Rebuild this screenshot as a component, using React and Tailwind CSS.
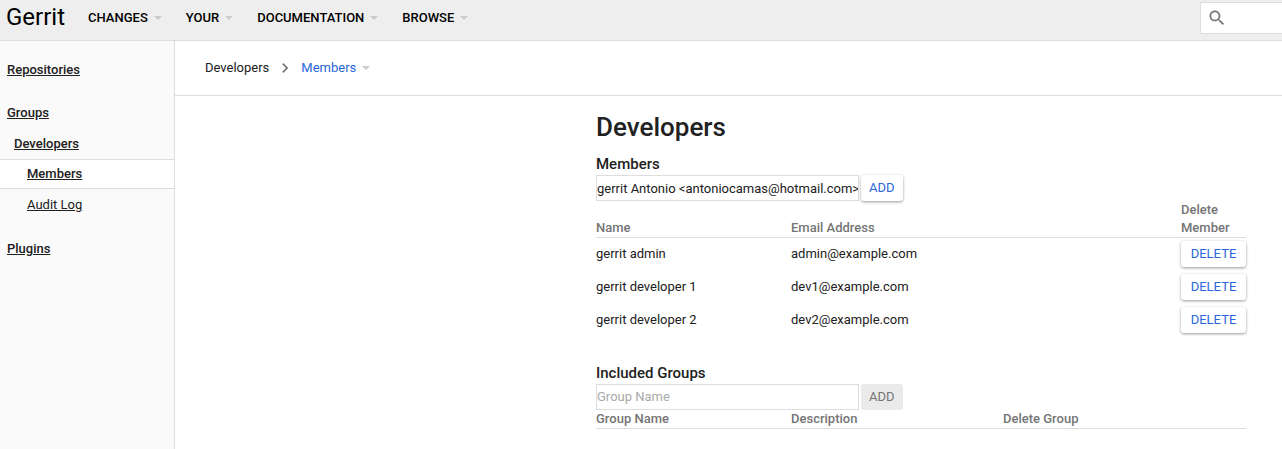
import { useState } from 'react';

const menus = ['Changes', 'Your', 'Documentation', 'Browse'];

const members = [
  { name: 'gerrit admin', email: 'admin@example.com' },
  { name: 'gerrit developer 1', email: 'dev1@example.com' },
  { name: 'gerrit developer 2', email: 'dev2@example.com' },
];

function DropIcon() {
  return (
    <svg viewBox="0 0 20 20" className="size-5 shrink-0 fill-[#cccccc]" aria-hidden="true">
      <path d="M6 8l4 4 4-4z" />
    </svg>
  );
}

function TopBar() {
  return (
    <header className="flex h-[41px] items-center border-b border-[#dddddd] bg-[#eeeeee] pl-[6px] text-black">
      <a href="#home" className="-mt-1.5 text-2xl leading-8">Gerrit</a>
      <nav className="-mt-1 ml-[23px] flex flex-1 gap-[18px]">
        {menus.map((m) => (
          <button key={m} type="button" className="flex items-center font-medium uppercase">
            {m}
            <DropIcon />
          </button>
        ))}
      </nav>
      <form role="search" className="-mt-1 flex h-8 w-[82px] items-center rounded-l-xs border border-r-0 border-[#dddddd] bg-white pl-[6px]">
        <svg viewBox="0 0 24 24" className="size-5 shrink-0 fill-[#757575]" aria-hidden="true">
          <path d="M15.5 14h-.79l-.28-.27C15.41 12.59 16 11.11 16 9.5 16 5.91 13.09 3 9.5 3S3 5.91 3 9.5 5.91 16 9.5 16c1.61 0 3.09-.59 4.23-1.57l.27.28v.79l5 4.99L20.49 19l-4.99-5zm-6 0C7.01 14 5 11.99 5 9.5S7.01 5 9.5 5 14 7.01 14 9.5 11.99 14 9.5 14z" />
        </svg>
        <input type="text" aria-label="Search" className="w-full min-w-0 outline-none" />
      </form>
    </header>
  );
}

function SideNav() {
  return (
    <nav className="w-[175px] shrink-0 border-r border-[#dddddd] bg-[#fafafa] pt-5 leading-[18px] underline">
      <ul>
        <li className="pl-[7px] font-medium"><a href="#repositories">Repositories</a></li>
        <li className="mt-[25px]">
          <a href="#groups" className="ml-[7px] font-medium">Groups</a>
          <ul>
            <li className="mt-[13px] pl-[14px] font-medium"><a href="#developers">Developers</a></li>
            <li className="mt-[6px] border-y border-[#dddddd] bg-white py-[5px] pl-[27px] font-medium">
              <a href="#members" aria-current="page">Members</a>
            </li>
            <li className="mt-[7px] pl-[27px]"><a href="#audit-log">Audit Log</a></li>
          </ul>
        </li>
        <li className="mt-[26px] pl-[7px] font-medium"><a href="#plugins">Plugins</a></li>
      </ul>
    </nav>
  );
}

function Breadcrumb() {
  return (
    <div className="flex h-[55px] items-center border-b border-[#dddddd] pl-[30px]">
      <a href="#developers">Developers</a>
      <svg viewBox="0 0 24 24" className="mx-[6px] size-5 fill-[#757575]" aria-hidden="true">
        <path d="M10 6L8.59 7.41 13.17 12l-4.58 4.59L10 18l6-6z" />
      </svg>
      <button type="button" className="flex items-center text-[#2a66d9]">
        Members
        <DropIcon />
      </button>
    </div>
  );
}

const raised =
  'h-[26px] rounded-[3px] bg-white uppercase text-[#2a66d9] shadow-[0_1px_3px_rgba(0,0,0,0.4)]';

function AddForm({ label, placeholder, initial }) {
  const [value, setValue] = useState(initial);
  return (
    <form className="flex gap-[2px]" onSubmit={(e) => e.preventDefault()}>
      <input
        type="text"
        aria-label={label}
        placeholder={placeholder}
        value={value}
        onChange={(e) => setValue(e.target.value)}
        className="h-[26px] w-[263px] border border-[#dddddd] bg-white outline-none placeholder:text-[#aaaaaa]"
      />
      <button
        type="submit"
        disabled={!value}
        className={value ? raised + ' px-2' : 'h-[26px] rounded-[3px] bg-[#eaeaea] px-2 uppercase text-[#757575]'}
      >
        Add
      </button>
    </form>
  );
}

export default function App() {
  return (
    <div className="flex min-h-screen flex-col bg-white font-[Roboto,sans-serif] text-[13px] leading-[18px] text-[#212121]">
      <TopBar />
      <div className="flex flex-1">
        <SideNav />
        <div className="min-w-0 flex-1">
          <Breadcrumb />
          <main className="ml-auto mr-9 max-w-[650px] pt-[15px]">
            <h1 className="text-[26px] font-medium leading-8">Developers</h1>

            <section className="mt-[11px]">
              <h2 className="text-[15px] font-medium leading-[21px]">Members</h2>
              <AddForm label="Add member" placeholder="Name Or Email" initial="gerrit Antonio <antoniocamas@hotmail.com>" />
              <table className="w-full table-fixed border-collapse text-left">
                <thead className="text-[#757575]">
                  <tr className="border-b border-[#dddddd] align-bottom">
                    <th className="w-[30%] font-medium">Name</th>
                    <th className="w-[60%] font-medium">Email Address</th>
                    <th className="w-[10%] font-medium">Delete Member</th>
                  </tr>
                </thead>
                <tbody>
                  {members.map((m) => (
                    <tr key={m.email} className="h-[33px]">
                      <td>{m.name}</td>
                      <td>{m.email}</td>
                      <td>
                        <button type="button" className={raised + ' block w-full'}>Delete</button>
                      </td>
                    </tr>
                  ))}
                </tbody>
              </table>
            </section>

            <section className="mt-[26px]">
              <h2 className="text-[15px] font-medium leading-[21px]">Included Groups</h2>
              <AddForm label="Add group" placeholder="Group Name" initial="" />
              <table className="w-full table-fixed border-collapse text-left">
                <thead className="text-[#757575]">
                  <tr className="border-b border-[#dddddd]">
                    <th className="w-[195px] font-medium">Group Name</th>
                    <th className="w-[212px] font-medium">Description</th>
                    <th className="font-medium">Delete Group</th>
                  </tr>
                </thead>
              </table>
            </section>
          </main>
        </div>
      </div>
    </div>
  );
}
